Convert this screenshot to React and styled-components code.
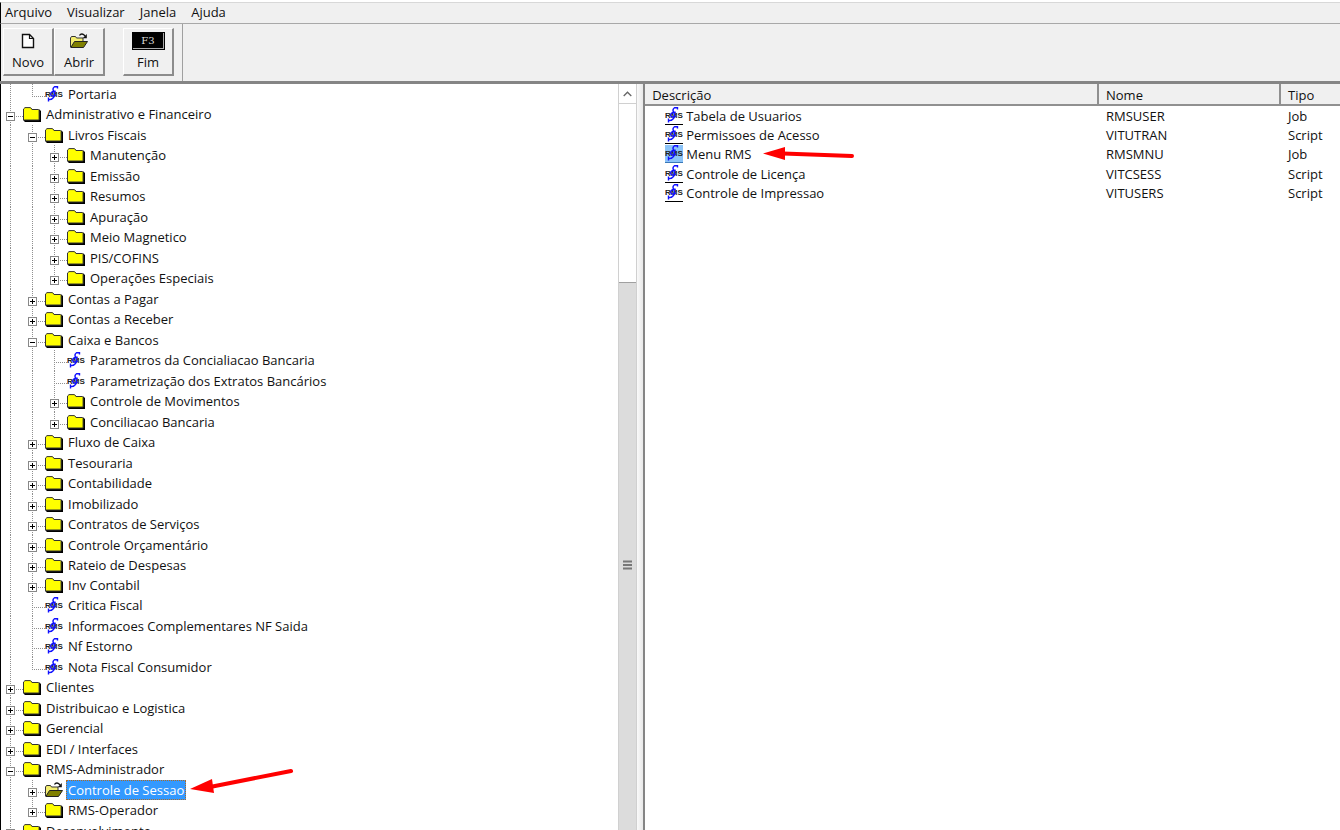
import React, { useState } from 'react';
import styled, { createGlobalStyle, css } from 'styled-components';

const menus = ['Arquivo', 'Visualizar', 'Janela', 'Ajuda'];

// depth, kind, label, state
const nodes = [
  { depth: 1, kind: 'job', label: 'Portaria' },
  { depth: 0, kind: 'folder', label: 'Administrativo e Financeiro', open: true },
  { depth: 1, kind: 'folder', label: 'Livros Fiscais', open: true },
  { depth: 2, kind: 'folder', label: 'Manutenção' },
  { depth: 2, kind: 'folder', label: 'Emissão' },
  { depth: 2, kind: 'folder', label: 'Resumos' },
  { depth: 2, kind: 'folder', label: 'Apuração' },
  { depth: 2, kind: 'folder', label: 'Meio Magnetico' },
  { depth: 2, kind: 'folder', label: 'PIS/COFINS' },
  { depth: 2, kind: 'folder', label: 'Operações Especiais' },
  { depth: 1, kind: 'folder', label: 'Contas a Pagar' },
  { depth: 1, kind: 'folder', label: 'Contas a Receber' },
  { depth: 1, kind: 'folder', label: 'Caixa e Bancos', open: true },
  { depth: 2, kind: 'job', label: 'Parametros da Concialiacao Bancaria' },
  { depth: 2, kind: 'job', label: 'Parametrização dos Extratos Bancários' },
  { depth: 2, kind: 'folder', label: 'Controle de Movimentos' },
  { depth: 2, kind: 'folder', label: 'Conciliacao Bancaria' },
  { depth: 1, kind: 'folder', label: 'Fluxo de Caixa' },
  { depth: 1, kind: 'folder', label: 'Tesouraria' },
  { depth: 1, kind: 'folder', label: 'Contabilidade' },
  { depth: 1, kind: 'folder', label: 'Imobilizado' },
  { depth: 1, kind: 'folder', label: 'Contratos de Serviços' },
  { depth: 1, kind: 'folder', label: 'Controle Orçamentário' },
  { depth: 1, kind: 'folder', label: 'Rateio de Despesas' },
  { depth: 1, kind: 'folder', label: 'Inv Contabil' },
  { depth: 1, kind: 'job', label: 'Critica Fiscal' },
  { depth: 1, kind: 'job', label: 'Informacoes Complementares NF Saida' },
  { depth: 1, kind: 'job', label: 'Nf Estorno' },
  { depth: 1, kind: 'job', label: 'Nota Fiscal Consumidor' },
  { depth: 0, kind: 'folder', label: 'Clientes' },
  { depth: 0, kind: 'folder', label: 'Distribuicao e Logistica' },
  { depth: 0, kind: 'folder', label: 'Gerencial' },
  { depth: 0, kind: 'folder', label: 'EDI / Interfaces' },
  { depth: 0, kind: 'folder', label: 'RMS-Administrador', open: true },
  { depth: 1, kind: 'opened', label: 'Controle de Sessao', marked: true },
  { depth: 1, kind: 'folder', label: 'RMS-Operador' },
  { depth: 0, kind: 'folder', label: 'Desenvolvimento' },
];

const items = [
  { label: 'Tabela de Usuarios', name: 'RMSUSER', type: 'Job' },
  { label: 'Permissoes de Acesso', name: 'VITUTRAN', type: 'Script' },
  { label: 'Menu RMS', name: 'RMSMNU', type: 'Job', marked: true },
  { label: 'Controle de Licença', name: 'VITCSESS', type: 'Script' },
  { label: 'Controle de Impressao', name: 'VITUSERS', type: 'Script' },
];

// true when a later sibling exists at the given level, so the guide goes on
const goesOn = (index, level) => {
  if (level === 0) return true;
  for (let i = index + 1; i < nodes.length; i++) {
    if (nodes[i].depth < level) return false;
    if (nodes[i].depth === level) return true;
  }
  return false;
};

const PageIcon = () => (
  <svg width="14" height="16" viewBox="0 0 14 16" aria-hidden="true">
    <path d="M1.5 1.5h7l4 4v9h-11z" fill="#fff" stroke="#111" strokeWidth="1.4" />
    <path d="M8.5 1.5v4h4" fill="none" stroke="#111" strokeWidth="1.2" />
  </svg>
);

const OpenFolderIcon = () => (
  <svg width="18" height="16" viewBox="0 0 18 16" aria-hidden="true">
    <path d="M.5 14V5l1-1.500h4l1 1.500h6.500v4" fill="#f4ee70" stroke="#333" />
    <path d="M.8 14.500 4.500 8.500h13l-4 6z" fill="#808000" stroke="#222" />
    <path d="M9.500 2.500c1-2 4-2.200 5.500.500" fill="none" stroke="#111" strokeWidth="1.300" />
    <path d="M16.800 1v4.200h-4.200z" fill="#111" />
  </svg>
);

const FolderIcon = () => (
  <svg width="18" height="15" viewBox="0 0 18 15" aria-hidden="true">
    <path d="M2 2 3 1h5l1.500 1.500H16.500L18 4v11H2l-1.500-1.500z" fill="#000" />
    <path d="M.5 13V2L2 .6h5.500L9 2.500h6.200l.9 1V13z" fill="#ff0" stroke="#333" strokeWidth="1" />
  </svg>
);

const JobIcon = () => (
  <svg width="18" height="16" viewBox="0 0 18 16" aria-hidden="true">
    <text x="0" y="11" fontFamily="Liberation Sans, sans-serif" fontSize="8" fontWeight="700" fill="#222">RMS</text>
    <path
      d="M12.500 2.500V.800H9.500C7.800 2 7.800 4 8.800 5.500c1.200 2.500.900 5-.800 6.500-1 1.300-2.300 1.600-4 1.600M10.800 5.500C8.500 4.600 5.800 5.800 5.600 8.200c.2 2 3.400 2.600 5.200.800M3.500 11.500v4"
      fill="none" stroke="#1010ff" strokeWidth="1.400"
    />
  </svg>
);

const icons = { folder: FolderIcon, opened: OpenFolderIcon, job: JobIcon };

export default function App() {
  const [selected, setSelected] = useState('Controle de Sessao');

  return (
    <Window>
      <GlobalStyle />
      <MenuBar>
        {menus.map((menu) => <MenuItem key={menu} type="button">{menu}</MenuItem>)}
      </MenuBar>
      <Toolbar>
        <ToolGroup>
          <ToolButton type="button"><ToolIcon><PageIcon /></ToolIcon>Novo</ToolButton>
          <ToolButton type="button"><ToolIcon><OpenFolderIcon /></ToolIcon>Abrir</ToolButton>
        </ToolGroup>
        <ToolButton type="button"><ToolIcon><KeyCap>F3</KeyCap></ToolIcon>Fim</ToolButton>
      </Toolbar>
      <Panes>
        <TreePane>
          <Tree>
            {nodes.map((node, index) => {
              const Icon = icons[node.kind];
              return (
                <TreeRow key={node.label}>
                  {Array.from({ length: node.depth }, (_, level) => (
                    <Guide key={level} $on={goesOn(index, level)} />
                  ))}
                  <Branch $last={!goesOn(index, node.depth)}>
                    {node.kind !== 'job' && (
                      <Expander type="button" aria-label={`${node.open ? 'Recolher' : 'Expandir'} ${node.label}`}>
                        <svg width="7" height="7" viewBox="0 0 7 7" aria-hidden="true">
                          <path d={node.open ? 'M1 3.500h5' : 'M1 3.500h5M3.500 1v5'} stroke="#000" />
                        </svg>
                      </Expander>
                    )}
                  </Branch>
                  <NodeIcon><Icon /></NodeIcon>
                  <NodeLabel
                    type="button"
                    $selected={selected === node.label}
                    onClick={() => setSelected(node.label)}
                  >
                    {node.label}
                    {node.marked && (
                      <TreeArrow width="104" height="28" viewBox="0 0 104 28" aria-hidden="true">
                        <path d="M20 19 101 3" stroke="red" strokeWidth="4" strokeLinecap="round" />
                        <path d="M0 21 22 11 24 25z" fill="red" />
                      </TreeArrow>
                    )}
                  </NodeLabel>
                </TreeRow>
              );
            })}
          </Tree>
          <ScrollBar>
            <ScrollButton type="button" aria-label="Rolar para cima">
              <svg width="9" height="6" viewBox="0 0 9 6" aria-hidden="true">
                <path d="M.7 5 4.500 1.200 8.300 5" fill="none" stroke="#666" strokeWidth="1.300" />
              </svg>
            </ScrollButton>
            <Thumb>
              <svg width="9" height="10" viewBox="0 0 9 10" aria-hidden="true">
                <path d="M0 1.500h9M0 5h9M0 8.500h9" stroke="#777" strokeWidth="2" />
              </svg>
            </Thumb>
          </ScrollBar>
        </TreePane>
        <ListPane>
          <List>
            <colgroup>
              <col />
              <NameCol />
              <TypeCol />
            </colgroup>
            <thead>
              <tr>
                <HeadCell>Descrição</HeadCell>
                <HeadCell>Nome</HeadCell>
                <HeadCell>Tipo</HeadCell>
              </tr>
            </thead>
            <tbody>
              {items.map((item) => (
                <ListRow key={item.name}>
                  <td>
                    <Entry>
                      <EntryIcon $selected={item.marked}><JobIcon /></EntryIcon>
                      {item.label}
                      {item.marked && (
                        <ListArrow width="92" height="14" viewBox="0 0 92 14" aria-hidden="true">
                          <path d="M20 6.500 89 9" stroke="red" strokeWidth="4" strokeLinecap="round" />
                          <path d="M0 6.500 22 0v13z" fill="red" />
                        </ListArrow>
                      )}
                    </Entry>
                  </td>
                  <td>{item.name}</td>
                  <td>{item.type}</td>
                </ListRow>
              ))}
            </tbody>
          </List>
        </ListPane>
      </Panes>
    </Window>
  );
}

const GlobalStyle = createGlobalStyle`
  * {
    box-sizing: border-box;
  }
  body {
    margin: 0;
    overflow: hidden;
    background: #fff;
    color: #111;
    font: 13px/18px "Open Sans", "Noto Sans", sans-serif;
  }
  button {
    margin: 0;
    padding: 0;
    border: 0;
    background: none;
    color: inherit;
    font: inherit;
  }
  svg {
    display: block;
    flex: none;
  }
`;

const Window = styled.div`
  display: flex;
  flex-direction: column;
  height: 100vh;
  padding-top: 2px;
`;

const MenuBar = styled.nav`
  display: flex;
  gap: 15px;
  height: 22px;
  padding-left: 4px;
  border-top: 1px solid #d8d8d8;
  border-left: 1px solid #000;
  border-bottom: 1px solid #a8a8a8;
  background: #f0f0f0;
`;

const MenuItem = styled.button`
  height: 18px;
`;

const Toolbar = styled.div`
  display: flex;
  gap: 18px;
  height: 57px;
  padding: 4px 0 0 2px;
  border-left: 1px solid #000;
  background: linear-gradient(#a0a0a0, #a0a0a0) 181px 0 / 1px 100% no-repeat, #f0f0f0;
`;

const ToolGroup = styled.div`
  display: flex;
`;

const ToolButton = styled.button`
  display: flex;
  flex-direction: column;
  align-items: center;
  width: 51px;
  height: 48px;
  padding-top: 2px;
  border: solid;
  border-width: 1px 2px 2px 1px;
  border-color: #fff #8c8c8c #8c8c8c #fff;
`;

const ToolIcon = styled.span`
  display: grid;
  place-items: center;
  height: 20px;
  margin-bottom: 2px;
`;

const KeyCap = styled.span`
  display: grid;
  place-items: center;
  width: 33px;
  height: 18px;
  border: 1px solid #000;
  box-shadow: inset -1px -1px #aaa;
  background: #000;
  color: #ddd;
  font: 10px/12px "DejaVu Serif", serif;
`;

const Panes = styled.div`
  display: grid;
  grid-template-columns: 48% 1fr;
  flex: 1;
  min-height: 0;
  border-top: 3px solid #858585;
`;

const TreePane = styled.div`
  display: flex;
  min-height: 0;
  padding-right: 6px;
  border-left: 1px solid #000;
  background: linear-gradient(to left, #e8e8e8, #fafafa 6px, #fff 6px);
`;

const Tree = styled.ul`
  flex: 1;
  margin: 0;
  padding: 0;
  overflow: hidden;
  list-style: none;
`;

const TreeRow = styled.li`
  display: flex;
  height: 20px;
  &:nth-child(even) {
    height: 21px;
  }
  &:nth-child(24n) {
    height: 20px;
  }
`;

const dots = (direction) => `repeating-linear-gradient(${direction}, #909090 0 1px, transparent 1px 2px)`;

const Guide = styled.span`
  flex: none;
  width: 22px;
  ${({ $on }) => $on && css`
    background: ${dots('to bottom')} 9px 0 / 1px 100% no-repeat;
  `}
`;

const Branch = styled.span`
  flex: none;
  width: 22px;
  padding: 8px 0 0 5px;
  background:
    ${dots('to bottom')} 9px 0 / 1px ${({ $last }) => ($last ? '13px' : '100%')} no-repeat,
    ${dots('to right')} 9px 12px / 13px 1px no-repeat;
`;

const Expander = styled.button`
  display: block;
  border: 1px solid #888;
  background: #fff;
`;

const NodeIcon = styled.span`
  display: grid;
  place-items: center;
  flex: none;
  width: 18px;
  height: 20px;
  margin-right: 3px;
`;

const NodeLabel = styled.button`
  position: relative;
  height: 20px;
  padding: 0 2px;
  white-space: nowrap;
  ${({ $selected }) => $selected && css`
    background: #3399ff;
    color: #fff;
    outline: 1px dotted #b06a20;
    outline-offset: -1px;
  `}
`;

const TreeArrow = styled.svg`
  position: absolute;
  left: 100%;
  bottom: 4px;
  margin-left: 4px;
`;

const ScrollBar = styled.div`
  display: flex;
  flex-direction: column;
  gap: 178px;
  width: 19px;
  border: solid #d0d0d0;
  border-width: 0 1px;
  background: #fff;
`;

const ScrollButton = styled.button`
  display: grid;
  place-items: center;
  height: 20px;
  border-bottom: 1px solid #d0d0d0;
`;

const Thumb = styled.div`
  display: grid;
  place-items: center;
  flex: 1;
  padding-top: 16px;
  border-top: 1px solid #a0a0a0;
  background: #dcdcdc;
`;

const ListPane = styled.div`
  min-width: 0;
  border-left: 2px solid #858585;
  background: #fff;
`;

const List = styled.table`
  width: 100%;
  table-layout: fixed;
  border-collapse: separate;
  border-spacing: 0;
  td {
    padding: 0 0 0 7px;
    white-space: nowrap;
  }
  td:first-child {
    padding-left: 20px;
  }
`;

const NameCol = styled.col`
  width: 182px;
`;

const TypeCol = styled.col`
  width: 59px;
`;

const HeadCell = styled.th`
  height: 22px;
  padding: 2px 0 0 7px;
  border-right: 2px solid #909090;
  border-bottom: 2px solid #909090;
  background: #f0f0f0;
  font-weight: 400;
  text-align: left;
  &:last-child {
    border-right: 0;
  }
`;

const ListRow = styled.tr`
  height: 19px;
  &:nth-child(3n) {
    height: 20px;
  }
`;

const Entry = styled.div`
  display: flex;
  align-items: center;
  gap: 3px;
`;

const EntryIcon = styled.span`
  width: 18px;
  height: 18px;
  border-bottom: 1px solid #000;
  ${({ $selected }) => $selected && css`
    border-bottom-color: #3a78b8;
    background: #8cc4f8;
  `}
`;

const ListArrow = styled.svg`
  margin-left: 9px;
`;
